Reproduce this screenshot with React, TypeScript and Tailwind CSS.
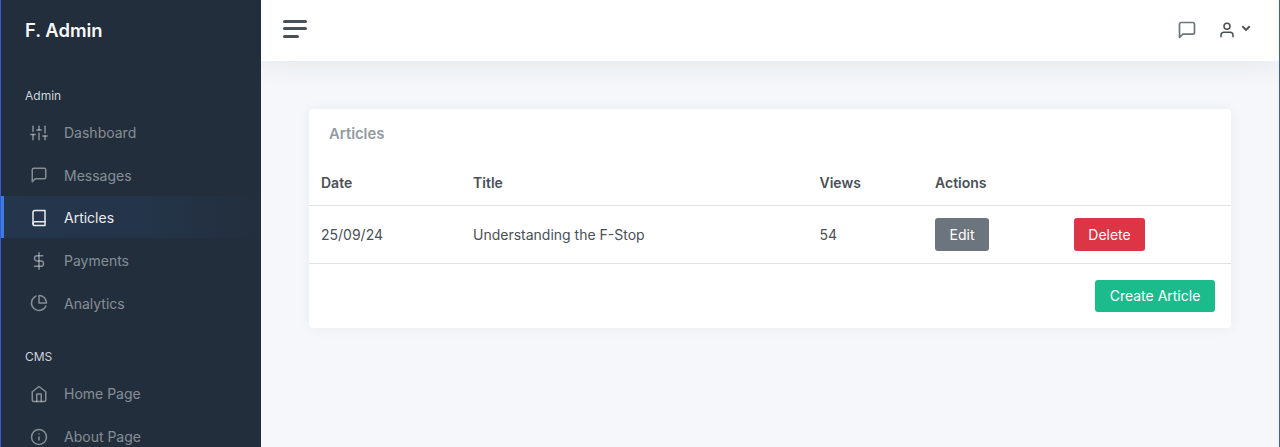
import React from "react";
import type { IconType } from "react-icons";
import {
  FiBook,
  FiDollarSign,
  FiHome,
  FiInfo,
  FiMessageSquare,
  FiPieChart,
  FiSliders,
  FiUser,
} from "react-icons/fi";

type NavItem = { label: string; icon: IconType; active?: boolean };

const adminItems: NavItem[] = [
  { label: "Dashboard", icon: FiSliders },
  { label: "Messages", icon: FiMessageSquare },
  { label: "Articles", icon: FiBook, active: true },
  { label: "Payments", icon: FiDollarSign },
  { label: "Analytics", icon: FiPieChart },
];

const cmsItems: NavItem[] = [
  { label: "Home Page", icon: FiHome },
  { label: "About Page", icon: FiInfo },
];

function NavLink({ label, icon: Icon, active }: NavItem) {
  return (
    <a
      href="#"
      className={
        active
          ? "flex h-[42.7px] items-center border-l-3 border-[#3b7ddd] bg-linear-to-r from-[#3b7ddd]/10 via-[#3b7ddd]/9 via-50% to-transparent pl-[26px] text-[#e9ecef]"
          : "flex h-[42.7px] items-center border-l-3 border-transparent pl-[26px] text-[#e9ecef]/50"
      }
    >
      <Icon className="mt-0.5 mr-4 size-[18px]" />
      <span className="mt-[2.5px] text-sm">{label}</span>
    </a>
  );
}

function NavSection({ title, items }: { title: string; items: NavItem[] }) {
  return (
    <section>
      <h2 className="pt-[24.4px] pb-[5.6px] pl-6 text-xs leading-[18px] text-[#ced4da]">{title}</h2>
      <nav>
        {items.map((item) => (
          <NavLink key={item.label} {...item} />
        ))}
      </nav>
    </section>
  );
}

function Sidebar() {
  return (
    <aside className="w-[260px] shrink-0 overflow-hidden bg-[#222e3c]">
      <div className="h-[62.25px] pt-4 pl-6 text-[18.4px] leading-7 font-semibold text-[#f8f9fa]">F. Admin</div>
      <NavSection title="Admin" items={adminItems} />
      <NavSection title="CMS" items={cmsItems} />
    </aside>
  );
}

function TopBar() {
  return (
    <header className="flex h-[61px] shrink-0 items-center justify-between bg-white pr-7 pl-[22px] shadow-[0_0_32px_0_rgba(33,37,41,0.1)]">
      <button type="button" aria-label="Toggle menu" className="mb-[3px] flex flex-col gap-1">
        <span className="h-[3px] w-6 rounded-full bg-[#495057]" />
        <span className="mb-px h-[3px] w-6 rounded-full bg-[#495057]" />
        <span className="h-[3px] w-4 rounded-full bg-[#495057]" />
      </button>
      <div className="flex items-center">
        <FiMessageSquare className="mr-[21px] mb-[2px] size-5 text-[#6c757d]" />
        <FiUser className="mr-[6px] mb-[2px] size-[18px] text-[#495057]" />
        <svg viewBox="0 0 9 7" className="mb-[5px] h-[7px] w-[9px] text-[#495057]" fill="none" stroke="currentColor" strokeWidth="2">
          <path d="M.3 1.2 4 4.9 7.7 1.2" />
        </svg>
      </div>
    </header>
  );
}

function ArticlesCard() {
  return (
    <section className="rounded-[4px] bg-white pb-4 shadow-[0_0_14px_0_rgba(33,37,41,0.05)]">
      <h1 className="h-[51px] pt-3.5 pl-5 text-[14.8px] leading-[22px] font-semibold text-[#939ba2]">Articles</h1>
      <table className="w-full table-fixed text-left text-sm text-[#495057]">
        <colgroup>
          <col className="w-[152px]" />
          <col className="w-[346.5px]" />
          <col className="w-[115.5px]" />
          <col className="w-[139px]" />
          <col />
        </colgroup>
        <thead>
          <tr className="h-[45px] border-b border-[#dee2e6]">
            <th className="px-3 pt-px font-semibold">Date</th>
            <th className="px-3 pt-px font-semibold">Title</th>
            <th className="px-3 pt-px font-semibold">Views</th>
            <th className="px-3 pt-px font-semibold">Actions</th>
            <th />
          </tr>
        </thead>
        <tbody>
          <tr className="h-[58px] border-b border-[#dee2e6]">
            <td className="px-3 pt-px">25/09/24</td>
            <td className="px-3 pt-px">Understanding the F-Stop</td>
            <td className="px-3 pt-px">54</td>
            <td className="px-3">
              <button type="button" className="block h-[33px] w-[54px] rounded-[3px] bg-[#6c757d] pt-px text-white">
                Edit
              </button>
            </td>
            <td className="px-3">
              <button type="button" className="block h-[33px] w-[71px] rounded-[3px] bg-[#dc3545] pt-px text-white">
                Delete
              </button>
            </td>
          </tr>
        </tbody>
      </table>
      <div className="flex justify-end pt-4 pr-4">
        <button type="button" className="h-8 w-[120px] rounded-[3px] bg-[#1cbb8c] text-sm text-white">
          Create Article
        </button>
      </div>
    </section>
  );
}

export default function App() {
  return (
    <div className="flex h-[447px] w-full overflow-hidden border-x border-[#3b56d8] bg-[#f5f7fb] font-[Inter,sans-serif]">
      <Sidebar />
      <div className="flex min-w-0 flex-1 flex-col overflow-hidden">
        <TopBar />
        <main className="p-12">
          <ArticlesCard />
        </main>
      </div>
    </div>
  );
}
